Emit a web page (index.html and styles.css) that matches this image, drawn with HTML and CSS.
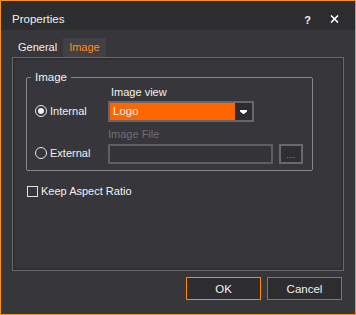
FILE: index.html
```html
<!DOCTYPE html>
<html lang="en">
<head>
    <meta charset="UTF-8">
    <title>Properties</title>
    <link rel="stylesheet" href="styles.css">
</head>
<body>
    <div class="dialog">
        <div class="title-bar">
            <span class="title">Properties</span>
            <span class="title-help">?</span>
            <span class="title-close">
                <svg width="9" height="8" viewBox="0 0 9 8"><path d="M1 0.5L8 7.5M8 0.5L1 7.5" stroke="#fff" stroke-width="1.6"/></svg>
            </span>
        </div>

        <div class="tabs">
            <span class="tab">General</span>
            <span class="tab active">Image</span>
        </div>

        <div class="tab-panel">
            <fieldset class="group">
                <legend>Image</legend>
                <div class="group-grid">
                    <span></span>
                    <label class="field-label">Image view</label>

                    <label class="radio-row"><span class="radio checked"></span>Internal</label>
                    <div class="combo">
                        <span class="combo-value">Logo</span>
                        <span class="combo-btn">
                            <svg width="7" height="4" viewBox="0 0 7 4"><path d="M0 0H7V1.5L4 4H3L0 1.5Z" fill="#fff"/></svg>
                        </span>
                    </div>

                    <span></span>
                    <label class="field-label dim">Image File</label>

                    <label class="radio-row"><span class="radio"></span>External</label>
                    <div class="file-row">
                        <span class="textbox"></span>
                        <span class="browse">...</span>
                    </div>
                </div>
            </fieldset>

            <label class="check-row"><span class="checkbox"></span>Keep Aspect Ratio</label>
        </div>

        <div class="buttons">
            <button class="btn primary">OK</button>
            <button class="btn">Cancel</button>
        </div>
    </div>
</body>
</html>
```

FILE: styles.css
```css
* {
    margin: 0;
    padding: 0;
    box-sizing: border-box;
}

body {
    font-family: "Liberation Sans", Arial, sans-serif;
    font-size: 11px;
    color: #f1f1f1;
    background: #37373b;
}

.dialog {
    width: 356px;
    height: 315px;
    border: 1px solid #f7901e;
    background: #37373b;
}

/* title bar */
.title-bar {
    height: 29px;
    background: #2d2d30;
    display: flex;
    align-items: flex-start;
    padding: 12px 0 0 11px;
    line-height: 13px;
}

.title {
    flex: 1;
    font-size: 11.5px;
}

.title-help {
    font-weight: bold;
    font-size: 11px;
    margin-right: 19px;
    margin-top: 1px;
}

.title-close {
    margin-right: 16px;
    margin-top: 2px;
}

.title-close svg {
    display: block;
}

/* tabs */
.tabs {
    display: flex;
    margin-top: 8px;
    padding-left: 11px;
    height: 19px;
}

.tab {
    padding: 0 6px;
    line-height: 19px;
}

.tab.active {
    background: #404045;
    color: #ff8c1a;
}

.tab-panel {
    margin: 0 11px;
    height: 214px;
    border: 1px solid #68686c;
    box-shadow: inset 0 0 0 2px #2f2f33;
    padding-top: 12px;
}

/* group box */
.group {
    width: 287px;
    margin-left: 13px;
    border: 1px solid #858585;
    border-radius: 2px;
    padding: 1px 0 6px 0;
    min-inline-size: 0;
}

.group legend {
    margin-left: 4px;
    padding: 0 4px;
    line-height: 14px;
    font-size: 11.5px;
}

.group-grid {
    display: grid;
    grid-template-columns: 73px auto;
    align-items: center;
    padding-left: 8px;
}

.field-label {
    line-height: 14px;
    padding-left: 3px;
}

.field-label.dim {
    color: #6e6e72;
    margin-top: 5px;
    padding-left: 0;
}

.radio-row {
    display: flex;
    align-items: center;
    gap: 3px;
    line-height: 14px;
}

.radio {
    width: 12px;
    height: 12px;
    border: 1px solid #e6e6e6;
    border-radius: 50%;
    display: flex;
    align-items: center;
    justify-content: center;
}

.radio.checked::after {
    content: "";
    width: 6px;
    height: 6px;
    border-radius: 50%;
    background: #f1f1f1;
}

.combo {
    display: flex;
    width: 146px;
    height: 21px;
    margin-top: 2px;
    border: 2px solid #67676b;
}

.combo-value {
    flex: 1;
    background: #ff6600;
    padding-left: 3px;
    line-height: 17px;
    font-size: 11.5px;
}

.combo-btn {
    width: 17px;
    background: #2d2d30;
    display: flex;
    align-items: center;
    justify-content: center;
}

.combo-btn svg {
    display: block;
}

.file-row {
    display: flex;
    gap: 6px;
    margin-top: 3px;
}

.textbox {
    width: 165px;
    height: 20px;
    border: 2px solid #5f5f63;
    background: #343438;
}

.browse {
    width: 24px;
    height: 20px;
    border: 2px solid #69696d;
    background: #2f2f33;
    color: #909090;
    font-size: 9px;
    letter-spacing: 0.5px;
    text-align: center;
    line-height: 18px;
}

/* checkbox */
.check-row {
    display: flex;
    align-items: center;
    gap: 3px;
    margin: 13px 0 0 14px;
    line-height: 14px;
}

.checkbox {
    width: 11px;
    height: 11px;
    border: 1px solid #e0e0e0;
}

/* footer buttons */
.buttons {
    display: flex;
    justify-content: flex-end;
    gap: 6px;
    margin-top: 6px;
    padding-right: 13px;
}

.btn {
    width: 75px;
    height: 23px;
    background: #2d2d30;
    border: 1px solid #78787c;
    color: #f1f1f1;
    font-family: "Liberation Sans", Arial, sans-serif;
    font-size: 11.5px;
}

.btn.primary {
    border-color: #ff8c00;
}
```
